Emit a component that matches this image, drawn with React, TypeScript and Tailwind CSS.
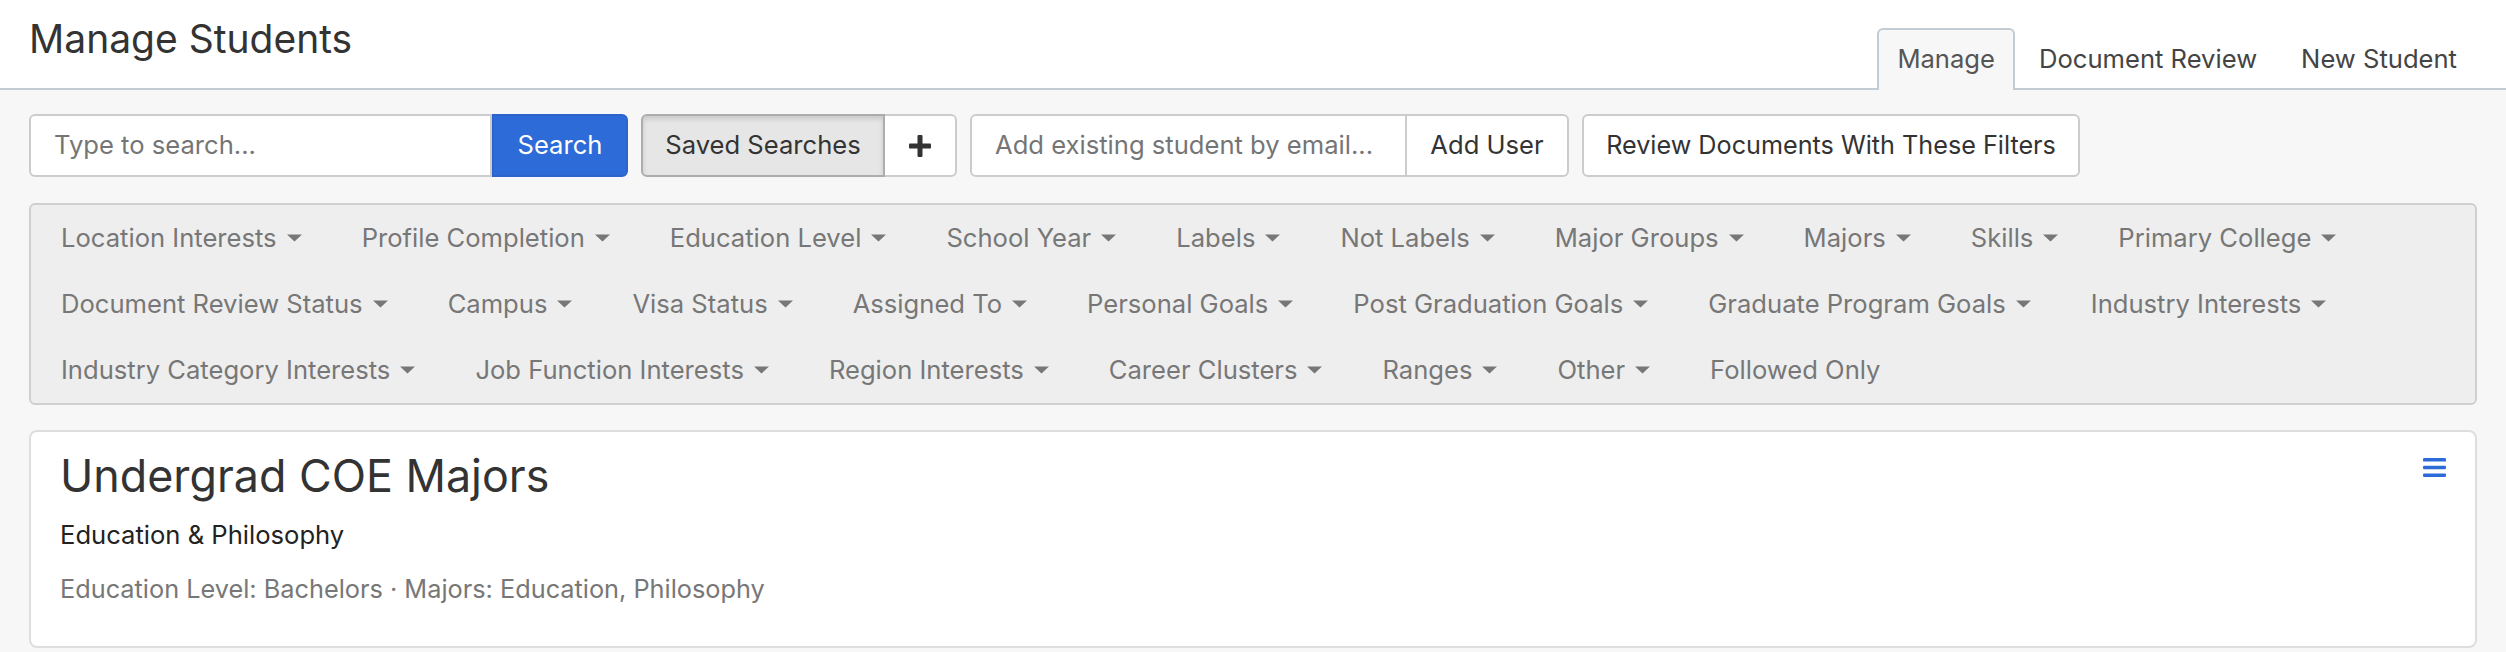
import React from "react";

const rows: { label: string; caret: boolean }[][] = [
  [
    "Location Interests",
    "Profile Completion",
    "Education Level",
    "School Year",
    "Labels",
    "Not Labels",
    "Major Groups",
    "Majors",
    "Skills",
    "Primary College",
  ].map((label) => ({ label, caret: true })),
  [
    "Document Review Status",
    "Campus",
    "Visa Status",
    "Assigned To",
    "Personal Goals",
    "Post Graduation Goals",
    "Graduate Program Goals",
    "Industry Interests",
  ].map((label) => ({ label, caret: true })),
  [
    ...[
      "Industry Category Interests",
      "Job Function Interests",
      "Region Interests",
      "Career Clusters",
      "Ranges",
      "Other",
    ].map((label) => ({ label, caret: true })),
    { label: "Followed Only", caret: false },
  ],
];

function Caret() {
  return (
    <svg width="15" height="8" viewBox="0 0 15 8" className="ml-[10px] shrink-0">
      <polygon points="0,0.5 15,0.5 7.5,7.5" fill="#777777" />
    </svg>
  );
}

function Tabs() {
  return (
    <div className="flex gap-1 mb-[-2px] text-[25.6px] leading-[31px]">
      <div className="h-[62px] px-[18px] pt-[13px] border-2 border-b-0 border-[#c3cbd3] rounded-t-[6px] bg-[#f7f7f7] text-[#555]">
        Manage
      </div>
      <div className="h-[62px] px-[18px] pt-[13px] border-2 border-transparent text-[#444]">
        Document Review
      </div>
      <div className="h-[62px] px-[18px] pt-[13px] border-2 border-transparent text-[#444]">
        New Student
      </div>
    </div>
  );
}

function Toolbar() {
  return (
    <div className="flex gap-[13px] px-[29px] pt-[24px] text-[25.6px]">
      <div className="flex w-[599px] h-[63px]">
        <input
          className="flex-1 min-w-0 border-2 border-[#cccccc] rounded-l-[6px] bg-white pl-[23px] text-[#333] placeholder:text-[#757575] outline-none"
          placeholder="Type to search..."
        />
        <button className="w-[136px] bg-[#2d6bd8] border-2 border-[#2a64cc] rounded-r-[6px] text-white">
          Search
        </button>
      </div>
      <div className="flex h-[63px]">
        <button className="w-[244px] bg-[#e6e6e6] border-2 border-[#adadad] rounded-l-[6px] text-[#333] shadow-[inset_0_3px_5px_rgba(0,0,0,0.125)]">
          Saved Searches
        </button>
        <button className="w-[72px] flex items-center justify-center bg-white border-2 border-l-0 border-[#cccccc] rounded-r-[6px]">
          <svg width="22" height="22" viewBox="0 0 22 22">
            <rect x="8.5" y="0" width="5" height="22" rx="1" fill="#333" />
            <rect x="0" y="8.5" width="22" height="5" rx="1" fill="#333" />
          </svg>
        </button>
      </div>
      <div className="flex w-[599px] h-[63px]">
        <input
          className="flex-1 min-w-0 border-2 border-[#cccccc] rounded-l-[6px] bg-white pl-[23px] text-[#333] placeholder:text-[#757575] outline-none"
          placeholder="Add existing student by email..."
        />
        <button className="w-[162px] bg-white border-2 border-l-0 border-[#cccccc] rounded-r-[6px] text-[#333]">
          Add User
        </button>
      </div>
      <button className="w-[498px] h-[63px] bg-white border-2 border-[#cccccc] rounded-[6px] text-[25.2px] text-[#333]">
        Review Documents With These Filters
      </button>
    </div>
  );
}

function Filters() {
  return (
    <div className="mx-[29px] mt-[26px] border-2 border-[#cfcfcf] rounded-[6px] bg-[#eeeeee]">
      {rows.map((row, i) => (
        <div key={i} className="flex items-center h-[66px]">
          {row.map((item) => (
            <div
              key={item.label}
              className="flex items-center px-[30px] text-[25.6px] text-[#777777] whitespace-nowrap"
            >
              {item.label}
              {item.caret && <Caret />}
            </div>
          ))}
        </div>
      ))}
    </div>
  );
}

function SearchCard() {
  return (
    <div className="relative mx-[29px] mt-[25px] border-2 border-[#dedede] rounded-[8px] bg-white pl-[29px] pt-[17px] pb-[42px]">
      <div className="text-[44.8px] leading-[54px] text-[#333]">Undergrad COE Majors</div>
      <div className="mt-[16px] text-[25.6px] leading-[31px] text-[#222]">
        Education &amp; Philosophy
      </div>
      <div className="mt-[23px] text-[25.3px] leading-[31px] text-[#777777]">
        Education Level: Bachelors · Majors: Education, Philosophy
      </div>
      <button className="absolute top-[26px] right-[29px]">
        <svg width="23" height="19" viewBox="0 0 23 19">
          <rect x="0" y="0" width="23" height="3.6" rx="1.2" fill="#2d6bd8" />
          <rect x="0" y="7.7" width="23" height="3.6" rx="1.2" fill="#2d6bd8" />
          <rect x="0" y="15.4" width="23" height="3.6" rx="1.2" fill="#2d6bd8" />
        </svg>
      </button>
    </div>
  );
}

export default function App() {
  return (
    <div className="min-h-screen bg-[#f7f7f7] font-['Inter','Liberation_Sans',sans-serif]">
      <div className="flex items-end justify-between h-[90px] bg-white border-b-2 border-[#c3cbd3] px-[29px]">
        <h1 className="self-start mt-[15px] text-[39px] leading-[48px] font-normal text-[#333]">
          Manage Students
        </h1>
        <Tabs />
      </div>
      <Toolbar />
      <Filters />
      <SearchCard />
    </div>
  );
}
